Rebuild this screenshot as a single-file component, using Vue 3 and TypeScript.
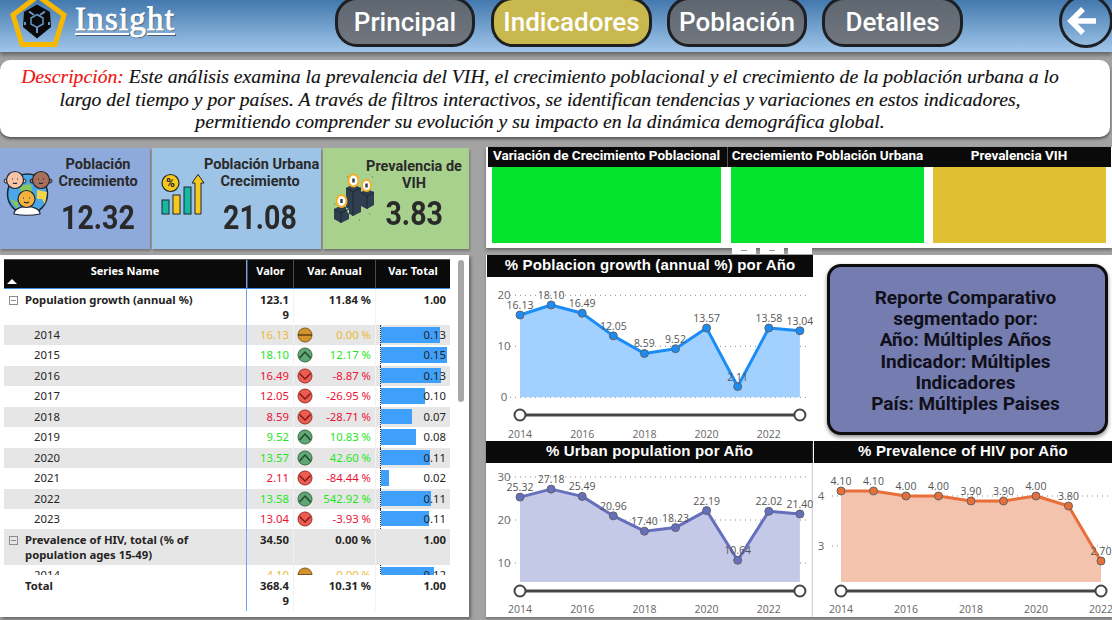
<script setup lang="ts">
interface ChartDef {
  title: string
  box: [number, number, number, number]
  color: string
  area: string
  x0: number
  step: number
  toY: (v: number) => number
  bottom: number
  gridFrom: number
  gridTo: number
  tickX: number
  ticks: number[]
  values: number[]
  sliderY: number
  yearY: number
}

const years = [2014, 2015, 2016, 2017, 2018, 2019, 2020, 2021, 2022, 2023]

const charts: ChartDef[] = [
  {
    title: '% Poblacion growth (annual %) por Año',
    box: [487, 277, 326, 163],
    color: '#1a8cf5',
    area: '#a2d1ff',
    x0: 520,
    step: 31.1,
    toY: v => 397.3 - v * 5.1,
    bottom: 397.3,
    gridFrom: 510,
    gridTo: 810,
    tickX: 504,
    ticks: [0, 10, 20],
    values: [16.13, 18.1, 16.49, 12.05, 8.59, 9.52, 13.57, 2.11, 13.58, 13.04],
    sliderY: 415,
    yearY: 434
  },
  {
    title: '% Urban population por Año',
    box: [486, 463, 327, 154],
    color: '#656fbd',
    area: '#c5c9e8',
    x0: 520,
    step: 31.1,
    toY: v => 606 - v * 4.3,
    bottom: 582,
    gridFrom: 510,
    gridTo: 810,
    tickX: 504,
    ticks: [10, 20, 30],
    values: [25.32, 27.18, 25.49, 20.96, 17.4, 18.23, 22.19, 10.64, 22.02, 21.4],
    sliderY: 591,
    yearY: 609
  },
  {
    title: '% Prevalence of HIV por Año',
    box: [814, 463, 298, 154],
    color: '#e96f38',
    area: '#f3c3ad',
    x0: 841,
    step: 32.5,
    toY: v => 496 + (4 - v) * 50,
    bottom: 582,
    gridFrom: 832,
    gridTo: 1110,
    tickX: 821,
    ticks: [3, 4],
    values: [4.1, 4.1, 4, 4, 3.9, 3.9, 4, 3.8, 2.7],
    sliderY: 591,
    yearY: 609
  }
]

function pts(c: ChartDef) {
  return c.values.map((v, i) => ({ x: c.x0 + i * c.step, y: c.toY(v), label: v.toFixed(2) }))
}
function linePts(c: ChartDef) {
  return pts(c).map(p => `${p.x},${p.y}`).join(' ')
}
function areaPts(c: ChartDef) {
  const p = pts(c)
  return `${p[0].x},${c.bottom} ${linePts(c)} ${p[p.length - 1].x},${c.bottom}`
}
function lastX(c: ChartDef) {
  return c.x0 + (c.values.length - 1) * c.step
}

type Trend = 'flat' | 'up' | 'down'
const rows: { year: number; val: number; pct: string; trend: Trend; total: string }[] = [
  { year: 2014, val: 16.13, pct: '0.00 %', trend: 'flat', total: '0.13' },
  { year: 2015, val: 18.1, pct: '12.17 %', trend: 'up', total: '0.15' },
  { year: 2016, val: 16.49, pct: '-8.87 %', trend: 'down', total: '0.13' },
  { year: 2017, val: 12.05, pct: '-26.95 %', trend: 'down', total: '0.10' },
  { year: 2018, val: 8.59, pct: '-28.71 %', trend: 'down', total: '0.07' },
  { year: 2019, val: 9.52, pct: '10.83 %', trend: 'up', total: '0.08' },
  { year: 2020, val: 13.57, pct: '42.60 %', trend: 'up', total: '0.11' },
  { year: 2021, val: 2.11, pct: '-84.44 %', trend: 'down', total: '0.02' },
  { year: 2022, val: 13.58, pct: '542.92 %', trend: 'up', total: '0.11' },
  { year: 2023, val: 13.04, pct: '-3.93 %', trend: 'down', total: '0.11' }
]
const barW = (v: number) => (v / 18.1) * 66 + 'px'
</script>

<template>
  <div class="page">
    <header class="topbar">
      <div class="brand">
        <svg class="logo" width="62" height="52" viewBox="0 0 62 52">
          <polygon points="31,-4 57,15 48,44.500 15,44.500 6,15" fill="none" stroke="#f8b800" stroke-width="5" />
          <polygon points="30,4.500 43,12 44,27 30,38.500 16,27 17,12" fill="#0a0a0a" />
          <path d="M22 11.500 L27 15 M38 11.500 L33 15 M30 33 V26 M18 22 V25 M42 22 V25" stroke="#6a96c4" stroke-width="2" fill="none" />
          <polygon points="30,14.500 36,18 36,24 30,27.500 24,24 24,18" fill="#0a0a0a" stroke="#6a96c4" stroke-width="1.500" />
        </svg>
        <span class="brand-name">Insight</span>
      </div>
      <nav class="nav">
        <a class="pill">Principal</a>
        <a class="pill pill-active">Indicadores</a>
        <a class="pill">Población</a>
        <a class="pill pill-last">Detalles</a>
      </nav>
      <div class="back">
        <svg width="36" height="36" viewBox="0 0 36 36">
          <path d="M31 18 H7 M18 6 L6 18 L18 30" fill="none" stroke="#fff" stroke-width="5.500" />
        </svg>
      </div>
    </header>

    <section class="desc">
      <span class="desc-tag">Descripción:</span> Este análisis examina la prevalencia del VIH, el crecimiento poblacional y el crecimiento de la población urbana a lo<br />
      largo del tiempo y por países. A través de filtros interactivos, se identifican tendencias y variaciones en estos indicadores,<br />
      permitiendo comprender su evolución y su impacto en la dinámica demográfica global.
    </section>

    <main class="content">
      <div class="left">
        <div class="kpis">
          <div class="kpi kpi-a">
            <svg class="kpi-icon" width="46" height="46" viewBox="0 0 46 46">
              <circle cx="23.500" cy="22" r="20" fill="#4ba7e8" stroke="#1c2733" stroke-width="1.500" />
              <path d="M15 14 L27 12 L28 20 L18 24 Z M6 27 L14 30 L14 38 Z" fill="#86c65c" />
              <path d="M33 18 L43 20 L41 32 L38 27 L33 27 Z" fill="#f7d54a" />
              <circle cx="2" cy="9" r="2" fill="#f7c4a8" stroke="#1c2733" />
              <circle cx="20" cy="9" r="2" fill="#f7c4a8" stroke="#1c2733" />
              <circle cx="28" cy="9" r="2" fill="#a8705a" stroke="#1c2733" />
              <circle cx="46" cy="9" r="2" fill="#a8705a" stroke="#1c2733" />
              <circle cx="11" cy="8" r="8.500" fill="#f7c4a8" stroke="#1c2733" stroke-width="1.200" />
              <circle cx="37" cy="8" r="8.500" fill="#a8705a" stroke="#1c2733" stroke-width="1.200" />
              <path d="M10 42 C10 32 36 32 36 42 Q23 44.500 10 42 Z" fill="#fff" stroke="#1c2733" stroke-width="1.200" />
              <circle cx="22.500" cy="27" r="8.500" fill="#f6b23e" stroke="#1c2733" stroke-width="1.200" />
              <path d="M8 7 h1 M13 7 h1 M34 7 h1 M39 7 h1 M19 26 h1 M25 26 h1 M9 11 q2 1 4 0 M35 11 q2 1 4 0 M20 30 q2.500 1.500 5 0" stroke="#1c2733" stroke-width="1.200" fill="none" />
            </svg>
            <div class="kpi-text kpi-text-a">
              <div class="kpi-label">Población<br />Crecimiento</div>
              <div class="kpi-value"><span>12.32</span></div>
            </div>
          </div>
          <div class="kpi kpi-b">
            <svg class="kpi-icon" width="44" height="44" viewBox="0 0 44 44">
              <circle cx="10.500" cy="9" r="8.500" fill="#f8c81c" stroke="#1c2733" stroke-width="1.200" />
              <text x="10.500" y="13" class="pct">%</text>
              <rect x="2" y="26" width="7" height="14" fill="#17b8a0" stroke="#1c2733" />
              <rect x="13" y="21" width="7" height="19" fill="#f8c81c" stroke="#1c2733" />
              <rect x="24" y="13" width="7" height="27" fill="#17b8a0" stroke="#1c2733" />
              <path d="M35 40 V9 H32 L38 0.500 L44 9 H41 V40 Z" fill="#f8c81c" stroke="#1c2733" />
            </svg>
            <div class="kpi-text kpi-text-b">
              <div class="kpi-label">Población Urbana<br />Crecimiento</div>
              <div class="kpi-value"><span>21.08</span></div>
            </div>
          </div>
          <div class="kpi kpi-c">
            <svg class="kpi-icon" width="42" height="50" viewBox="0 0 42 50">
              <path d="M1 30 h1 M14 3 h1 M39 3 h1 M26 46 h1 M36 40 h1" stroke="#7fa36a" stroke-width="2" />
              <path d="M1 35 L9 31 L16 35 V41 L13 40 V38 L20 42 L28 38 V32 L34 35 L41 31 V18 L34 15 L28 18 V14 L20 10 L13 14 V35 L16 41 V45 L8 49 L1 45 Z" fill="#2f3f50" />
              <path d="M13 14 L20 18 L28 14 M20 18 V42 M1 35 L8 39 L16 35 M8 39 V49 M28 18 L34 22 L41 18 M34 22 V35" fill="none" stroke="#1c2935" />
              <ellipse cx="8.500" cy="27" rx="5" ry="6" fill="#fff" stroke="#f2b028" stroke-width="2" />
              <ellipse cx="20.500" cy="6.500" rx="5" ry="6" fill="#fff" stroke="#f2b028" stroke-width="2" />
              <ellipse cx="33.500" cy="11.500" rx="4.500" ry="5.500" fill="#fff" stroke="#f2b028" stroke-width="2" />
              <path d="M8.500 25 v4 M20.500 4.500 v4 M33.500 9.500 v4" stroke="#2f3f50" stroke-width="2.500" />
            </svg>
            <div class="kpi-text kpi-text-c">
              <div class="kpi-label">Prevalencia de<br />VIH</div>
              <div class="kpi-value kpi-value-c"><span>3.83</span></div>
            </div>
          </div>
        </div>

        <div class="table-panel">
          <div class="table">
            <div class="row head">
              <div class="c c-name">Series Name<i class="sort"></i></div>
              <div class="c">Valor</div>
              <div class="c">Var. Anual</div>
              <div class="c">Var. Total</div>
            </div>
            <div class="scroller">
              <div class="row group">
                <div class="c c-name"><i class="toggle"></i>Population growth (annual %)</div>
                <div class="c c-val">123.1<br />9</div>
                <div class="c c-pct">11.84 %</div>
                <div class="c c-total">1.00</div>
              </div>
              <div v-for="(r, i) in rows" :key="r.year" class="row item" :class="{ odd: i % 2 === 0 }">
                <div class="c c-name c-year">{{ r.year }}</div>
                <div class="c c-val" :class="r.trend">{{ r.val.toFixed(2) }}</div>
                <div class="c c-pct" :class="r.trend">
                  <svg class="trend" width="16" height="16" viewBox="0 0 16 16">
                    <template v-if="r.trend === 'flat'">
                      <circle cx="8" cy="8" r="7" fill="#d4922c" stroke="#7d5a1e" />
                      <path d="M1 8 H15" stroke="#5d4214" stroke-width="1.500" />
                    </template>
                    <template v-else-if="r.trend === 'up'">
                      <circle cx="8" cy="8" r="7" fill="#5fa873" stroke="#3a6a48" />
                      <path d="M2.500 11 L8 5 L13.500 11" fill="none" stroke="#24482f" stroke-width="1.500" />
                    </template>
                    <template v-else>
                      <circle cx="8" cy="8" r="7" fill="#ee5b50" stroke="#99322a" />
                      <path d="M2.500 5.500 L8 11 L13.500 5.500" fill="none" stroke="#7c1d17" stroke-width="1.500" />
                    </template>
                  </svg>
                  <span>{{ r.pct }}</span>
                </div>
                <div class="c c-total c-bar">
                  <i class="bar" :style="{ width: barW(r.val) }"></i>
                  <span>{{ r.total }}</span>
                </div>
              </div>
              <div class="row group odd">
                <div class="c c-name"><i class="toggle"></i>Prevalence of HIV, total (% of<br />population ages 15-49)</div>
                <div class="c c-val">34.50</div>
                <div class="c c-pct">0.00 %</div>
                <div class="c c-total">1.00</div>
              </div>
              <div class="row item">
                <div class="c c-name c-year">2014</div>
                <div class="c c-val flat">4.10</div>
                <div class="c c-pct flat">
                  <svg class="trend" width="16" height="16" viewBox="0 0 16 16">
                    <circle cx="8" cy="8" r="7" fill="#d4922c" stroke="#7d5a1e" />
                    <path d="M1 8 H15" stroke="#5d4214" stroke-width="1.500" />
                  </svg>
                  <span>0.00 %</span>
                </div>
                <div class="c c-total c-bar">
                  <i class="bar" :style="{ width: '53px' }"></i>
                  <span>0.12</span>
                </div>
              </div>
            </div>
            <div class="row group total">
              <div class="c c-name c-total-name">Total</div>
              <div class="c c-val">368.4<br />9</div>
              <div class="c c-pct">10.31 %</div>
              <div class="c c-total">1.00</div>
            </div>
          </div>
          <div class="scrollbar"></div>
        </div>
      </div>

      <div class="right">
        <div class="status">
          <div class="status-cols">
            <div class="status-col s1"><h4>Variación de Crecimiento Poblacional</h4><div class="tile green"></div></div>
            <div class="status-col s2"><h4>Creciemiento Población Urbana</h4><div class="tile green"></div></div>
            <div class="status-col s3"><h4>Prevalencia VIH</h4><div class="tile yellow"></div></div>
          </div>
          <div class="tabs"><i></i><i></i><i></i></div>
        </div>

        <div class="charts">
          <template v-for="(c, ci) in charts" :key="c.title">
            <div class="report" v-if="ci === 1">
              <div class="report-box">
                Reporte Comparativo<br />segmentado por:<br />Año: Múltiples Años<br />Indicador: Múltiples<br />Indicadores<br />País: Múltiples Paises
              </div>
            </div>
            <article class="chart" :class="'chart-' + ci">
              <h3>{{ c.title }}</h3>
              <svg :width="c.box[2]" :height="c.box[3]" :viewBox="c.box.join(' ')">
                <g v-for="t in c.ticks" :key="t">
                  <line :x1="c.gridFrom" :x2="c.gridTo" :y1="c.toY(t)" :y2="c.toY(t)" class="grid" />
                  <text :x="c.tickX" :y="c.toY(t) + 4" class="tick">{{ t }}</text>
                </g>
                <polygon :points="areaPts(c)" :fill="c.area" />
                <polyline :points="linePts(c)" fill="none" :stroke="c.color" stroke-width="3" stroke-linejoin="round" />
                <circle v-for="(p, i) in pts(c)" :key="i" :cx="p.x" :cy="p.y" r="4" :fill="c.color" stroke="#5f6368" stroke-width="1" />
                <text v-for="(p, i) in pts(c)" :key="'l' + i" :x="p.x" :y="p.y - 6" class="dlabel">{{ p.label }}</text>
                <line :x1="c.x0" :x2="lastX(c)" :y1="c.sliderY" :y2="c.sliderY" stroke="#444" stroke-width="3" />
                <circle :cx="c.x0" :cy="c.sliderY" r="5.500" fill="#fff" stroke="#444" stroke-width="2" />
                <circle :cx="lastX(c)" :cy="c.sliderY" r="5.500" fill="#fff" stroke="#444" stroke-width="2" />
                <text v-for="(y, i) in years.slice(0, c.values.length)" v-show="i % 2 === 0" :key="'y' + y" :x="c.x0 + i * c.step" :y="c.yearY + 4" class="year">{{ y }}</text>
              </svg>
            </article>
          </template>
        </div>
      </div>
    </main>
  </div>
</template>

<style>
html, body {
  margin: 0;
  background: #a3a3a3;
}
</style>

<style scoped>
.page {
  width: 1112px;
  height: 620px;
  overflow: hidden;
  background: #a3a3a3;
  font-family: Roboto, sans-serif;
}

.topbar {
  height: 52px;
  display: flex;
  align-items: flex-end;
  background: linear-gradient(#4379ae, #a0c6ea);
  box-shadow: 0 3px 4px #666;
  overflow: hidden;
  position: relative;
}
.brand {
  width: 335px;
  height: 52px;
  display: flex;
  flex-shrink: 0;
  align-items: flex-start;
  padding-left: 7px;
  box-sizing: border-box;
}
.logo {
  flex-shrink: 0;
  overflow: visible;
}
.brand-name {
  margin: -2px 0 0 6px;
  font: 400 33px/42px "Liberation Serif", serif;
  letter-spacing: 1.2px;
  color: #fff;
  -webkit-text-stroke: 0.5px #fff;
  text-decoration: underline;
  text-decoration-thickness: 2px;
  text-underline-offset: 3px;
  text-shadow: 1px 1px 1px #4a5a6a;
}
.nav {
  display: flex;
  height: 52px;
  gap: 15px;
}
.pill {
  width: 140px;
  height: 50px;
  margin-top: -3px;
  box-sizing: border-box;
  border: 3.5px solid #1d1f22;
  border-radius: 22px;
  background: linear-gradient(#5e6670, #71777f);
  color: #fff;
  font-size: 26px;
  font-weight: 500;
  line-height: 44px;
  text-align: center;
}
.pill-active {
  width: 161px;
  margin-left: 1px;
  background: #c9b84e;
}
.pill-last {
  width: 141px;
}
.back {
  width: 54px;
  height: 54px;
  flex-shrink: 0;
  margin: -6px 0 0 96px;
  align-self: flex-start;
  box-sizing: border-box;
  border: 3px solid #1d1f22;
  border-radius: 50%;
  display: flex;
  align-items: center;
  padding-left: 3px;
}

.desc {
  height: 77px;
  margin: 8px 2px 0 0;
  box-sizing: border-box;
  padding: 5px 30px 0 0;
  background: #fff;
  border-radius: 10px;
  box-shadow: 0 2px 3px #555;
  text-align: center;
  font: italic 400 19.700px/22.500px "Liberation Serif", serif;
  color: #111;
  -webkit-text-stroke: 0.15px #111;
}
.desc-tag {
  color: #f01414;
  -webkit-text-stroke: 0.15px #f01414;
}

.content {
  display: flex;
  margin-top: 10px;
}
.left {
  width: 470px;
  flex-shrink: 0;
}
.kpis {
  display: flex;
  gap: 2px;
  height: 101px;
  margin-top: 1px;
}
.kpi {
  display: flex;
  box-shadow: 1px 2px 2px #777;
  color: #2a2a2a;
  position: relative;
  box-sizing: border-box;
}
.kpi-a {
  width: 150px;
  background: #8ea9db;
}
.kpi-b {
  width: 169px;
  background: #9dc3e6;
}
.kpi-c {
  width: 146px;
  background: #a9d18e;
}
.kpi-icon {
  flex-shrink: 0;
  overflow: visible;
}
.kpi-a .kpi-icon { margin: 24px 0 0 4px; }
.kpi-b .kpi-icon { margin: 26px 0 0 8px; }
.kpi-c .kpi-icon { margin: 26px 0 0 10px; }
.kpi-text {
  text-align: center;
  white-space: nowrap;
}
.kpi-text-a { width: 96px; margin: 8px 0 0 0; }
.kpi-text-b { width: 112px; margin: 8px 0 0 0; }
.kpi-text-c { width: 100px; margin: 10px 0 0 -11px; }
.kpi-label {
  font-size: 14.500px;
  font-weight: 700;
  line-height: 17px;
}
.kpi-value {
  font-size: 34px;
  font-weight: 700;
  line-height: 36px;
  margin-top: 9px;
}
.kpi-value span {
  display: inline-block;
  transform: scaleX(0.84);
}
.kpi-value-c {
  margin-top: 3px;
}

.table-panel {
  display: flex;
  align-items: flex-start;
  height: 362px;
  margin-top: 6px;
  padding: 4px 0 0 4px;
  box-sizing: border-box;
  width: 469px;
  background: #fff;
  box-shadow: 2px 2px 3px #666;
  font-family: "Noto Sans", sans-serif;
  font-size: 11.300px;
  color: #252423;
}
.table {
  width: 446px;
  flex-shrink: 0;
}
.scrollbar {
  width: 6px;
  height: 142px;
  margin: 1px 0 0 8px;
  border-radius: 3px;
  background: #a8a8a8;
}
.row {
  display: grid;
  grid-template-columns: 243px 46px 82px 75px;
}
.head {
  height: 30px;
  background: #0a0a0a;
  color: #fff;
  font-weight: 700;
  font-size: 11px;
  border-top: 1px solid #555;
  border-bottom: 1px solid #3d8be0;
  box-sizing: border-box;
}
.head .c {
  text-align: center;
  padding-top: 3px;
  border-left: 1px solid #4a4a4a;
  position: relative;
}
.head .c:first-child {
  border-left: 0;
}
.sort {
  position: absolute;
  left: 3px;
  top: 19px;
  border: 5px solid transparent;
  border-top: 0;
  border-bottom: 5px solid #fff;
}
.scroller {
  height: 286px;
  overflow: hidden;
}
.c {
  white-space: nowrap;
  box-sizing: border-box;
}
.c-name {
  border-right: 1px solid #66a8ee;
}
.group {
  font-weight: 700;
  line-height: 15px;
  height: 36px;
}
.group .c {
  padding-top: 3px;
}
.group .c-name {
  padding-left: 21px;
  position: relative;
}
.total {
  height: 36px;
}
.toggle {
  position: absolute;
  left: 5px;
  top: 7px;
  width: 7px;
  height: 7px;
  border: 1px solid #8b8b8b;
  background: linear-gradient(#8b8b8b, #8b8b8b) center / 5px 1px no-repeat;
}
.c-val {
  text-align: right;
  padding-right: 4px;
}
.c-pct {
  text-align: right;
  padding-right: 4px;
  border-left: 1px solid #f2f2f2;
  position: relative;
}
.c-total {
  text-align: right;
  padding-right: 4px;
  border-left: 1px solid #f2f2f2;
}
.item {
  height: 20.450px;
  line-height: 20px;
}
.odd {
  background: #e6e6e6;
}
.c-year {
  padding-left: 30px;
}
.flat { color: #e8bb3a; }
.up { color: #1ee61e; }
.down { color: #ea1238; }
.trend {
  position: absolute;
  left: 3px;
  top: 2px;
}
.c-bar {
  position: relative;
  color: #252423;
}
.c-bar span {
  position: relative;
}
.c-bar::before {
  content: "";
  position: absolute;
  left: 4px;
  top: 0;
  bottom: 0;
  border-left: 1px dotted #333;
}
.bar {
  position: absolute;
  left: 5px;
  top: 2px;
  height: 15.500px;
  background: #3fa0fb;
}

.right {
  margin-left: 16px;
  width: 626px;
  flex-shrink: 0;
}
.status {
  position: relative;
  height: 101px;
  background: #fff;
  box-shadow: 0 2px 3px #666;
}
.status-cols {
  display: flex;
  height: 96px;
  background: linear-gradient(#0a0a0a, #0a0a0a) top / 623px 20px no-repeat;
}
.status-col h4 {
  margin: 0;
  height: 20px;
  color: #fff;
  font-size: 13.500px;
  font-weight: 700;
  line-height: 17px;
  text-align: center;
  white-space: nowrap;
}
.s1 {
  width: 241px;
  padding-left: 6px;
  box-sizing: border-box;
}
.s1 h4 { width: 229px; }
.s1 .tile { width: 229px; }
.s2 {
  width: 206px;
  padding-left: 4px;
  box-sizing: border-box;
  background: linear-gradient(#555, #555) left top / 1px 20px no-repeat;
}
.s2 h4 { width: 193px; }
.s2 .tile { width: 193px; }
.s3 {
  width: 172px;
}
.s3 .tile { width: 173px; }
.tile {
  height: 76px;
}
.green { background: #04e42f; }
.yellow { background: #e0bf33; }
.tabs {
  position: absolute;
  left: 246px;
  top: 101px;
  display: flex;
  gap: 4px;
}
.tabs i {
  display: block;
  width: 24px;
  height: 6px;
  background: linear-gradient(#999, #999) center 2px / 6px 1px no-repeat #fff;
}
.tabs i:last-child {
  background: #fff;
}

.charts {
  display: grid;
  grid-template-columns: 327px 299px;
  grid-template-rows: 186px 176px;
  margin-top: 7px;
}
.chart {
  background: #fff;
  box-shadow: 0 2px 2px #777;
}
.chart svg {
  display: block;
  overflow: hidden;
}
.chart-0 {
  grid-column: 1;
  grid-row: 1;
  border-left: 1px solid #fff;
}
.chart-1 {
  grid-column: 1;
  grid-row: 2;
}
.chart-2 {
  grid-column: 2;
  grid-row: 2;
  padding-left: 1px;
}
.chart h3 {
  margin: 0;
  height: 22px;
  background: #0a0a0a;
  color: #fff;
  font: 700 15px/20px "Liberation Sans", sans-serif;
  letter-spacing: 0.17px;
  text-align: center;
  white-space: nowrap;
}
.report {
  grid-column: 2;
  grid-row: 1;
  background: #fff;
  padding: 9px 4px 0 14px;
}
.report-box {
  height: 171px;
  box-sizing: border-box;
  border: 3.500px solid #0d0d0d;
  border-radius: 14px;
  background: #757cb0;
  box-shadow: 0 2px 4px #888;
  color: #10101a;
  font-size: 19px;
  font-weight: 700;
  line-height: 21.200px;
  text-align: center;
  padding: 20px 4px 0 0;
}
.grid {
  stroke: #8a8a8a;
  stroke-width: 1;
  stroke-dasharray: 1 4;
}
.tick {
  font: 400 11.500px "Open Sans", sans-serif;
  fill: #666;
  text-anchor: middle;
}
.dlabel {
  font: 400 10.500px "Open Sans", sans-serif;
  fill: #555;
  text-anchor: middle;
}
.year {
  font: 400 10.500px "Open Sans", sans-serif;
  fill: #666;
  text-anchor: middle;
}
.pct {
  font: 700 12px Roboto, sans-serif;
  fill: #1c2733;
  text-anchor: middle;
}
</style>
